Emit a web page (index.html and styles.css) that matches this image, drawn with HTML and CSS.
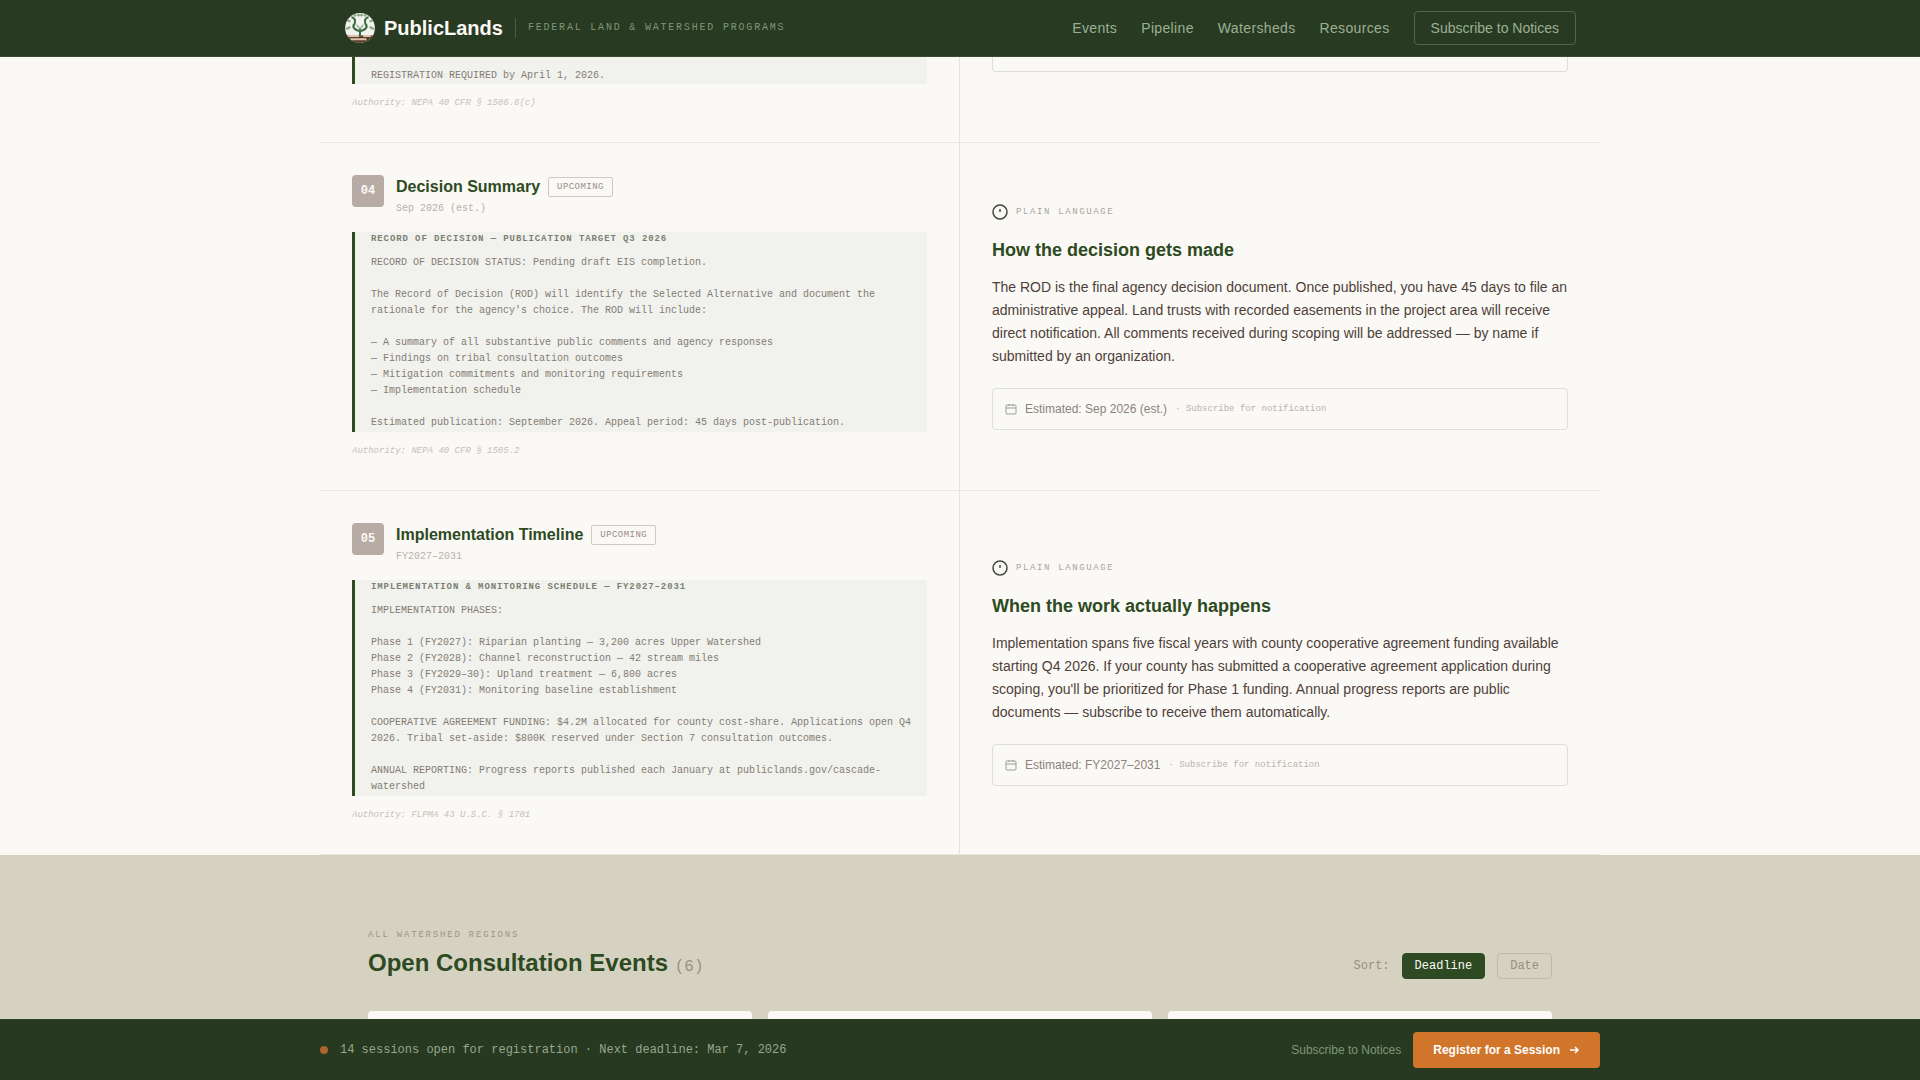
FILE: index.html
```html
<!DOCTYPE html>
<html lang="en">
<head>
    <meta charset="UTF-8">
    <meta name="viewport" content="width=device-width, initial-scale=1.0">
    <title>PublicLands</title>
    <link rel="stylesheet" href="styles.css">
</head>
<body>
    <header class="site-header">
        <div class="header-inner">
            <a class="brand" href="#">
                <svg class="brand-logo" viewBox="-1 -1 30 30" aria-hidden="true">
                    <clipPath id="logo-clip"><circle cx="14" cy="14" r="14"/></clipPath>
                    <g clip-path="url(#logo-clip)">
                        <rect width="28" height="28" fill="#eff3ec"/>
                        <path d="M0 6l5 2M28 6l-5 2M1 15l4-2M27 15l-4-2M8 1l2 2M20 1l-2 2M11 2h6" stroke="#8ba588" stroke-width="2"/>
                        <rect y="21" width="28" height="7" fill="#5a3f2c"/>
                        <path d="M3 21.500h10M17 21.500h7M5 24.500h15" stroke="#dfc3aa" stroke-width="2"/>
                        <path d="M14 22v-7M14 17C9 16 6 13 9 10C10 7 9 4 6 4M14 17C19 16 22 13 19 10C18 7 19 4 22 4" fill="none" stroke="#416b47" stroke-width="2"/>
                        <path d="M11 11l3 4 3-4" fill="none" stroke="#6f9470" stroke-width="1"/>
                    </g>
                </svg>
                <span class="brand-name">PublicLands</span>
                <span class="brand-tag">FEDERAL LAND &amp; WATERSHED PROGRAMS</span>
            </a>
            <nav class="main-nav">
                <a href="#events">Events</a>
                <a href="#pipeline">Pipeline</a>
                <a href="#">Watersheds</a>
                <a href="#">Resources</a>
                <button type="button" class="btn-outline">Subscribe to Notices</button>
            </nav>
        </div>
    </header>

    <main class="pipeline" id="pipeline">
        <section class="stage stage-partial">
            <div class="stage-official">
                <div class="document">
                    <p class="document-text">REGISTRATION REQUIRED by April 1, 2026.</p>
                </div>
                <p class="authority">Authority: NEPA 40 CFR § 1506.6(c)</p>
            </div>
            <div class="stage-plain">
                <div class="notice"></div>
            </div>
        </section>

        <section class="stage">
            <div class="stage-official">
                <div class="stage-head">
                    <span class="stage-number">04</span>
                    <div>
                        <div class="stage-title">
                            <h3>Decision Summary</h3>
                            <span class="badge">UPCOMING</span>
                        </div>
                        <p class="stage-date">Sep 2026 (est.)</p>
                    </div>
                </div>
                <div class="document">
                    <h4>RECORD OF DECISION — PUBLICATION TARGET Q3 2026</h4>
                    <p class="document-text">RECORD OF DECISION STATUS: Pending draft EIS completion.

The Record of Decision (ROD) will identify the Selected Alternative and document the rationale for the agency's choice. The ROD will include:

— A summary of all substantive public comments and agency responses
— Findings on tribal consultation outcomes
— Mitigation commitments and monitoring requirements
— Implementation schedule

Estimated publication: September 2026. Appeal period: 45 days post-publication.</p>
                </div>
                <p class="authority">Authority: NEPA 40 CFR § 1505.2</p>
            </div>
            <div class="stage-plain">
                <p class="plain-label">
                    <svg class="icon-info" viewBox="0 0 16 16" aria-hidden="true">
                        <circle cx="8" cy="8" r="7"/>
                        <path d="M8 5v3"/>
                    </svg>
                    PLAIN LANGUAGE
                </p>
                <h3>How the decision gets made</h3>
                <p class="plain-text">The ROD is the final agency decision document. Once published, you have 45 days to file an administrative appeal. Land trusts with recorded easements in the project area will receive direct notification. All comments received during scoping will be addressed — by name if submitted by an organization.</p>
                <div class="notice">
                    <svg class="icon-calendar" viewBox="0 0 12 12" aria-hidden="true">
                        <rect x="1" y="2" width="10" height="9" rx="1"/>
                        <path d="M1 5h10M4 1v2M8 1v2"/>
                    </svg>
                    <span>Estimated: Sep 2026 (est.)</span>
                    <span class="notice-hint">· Subscribe for notification</span>
                </div>
            </div>
        </section>

        <section class="stage">
            <div class="stage-official">
                <div class="stage-head">
                    <span class="stage-number">05</span>
                    <div>
                        <div class="stage-title">
                            <h3>Implementation Timeline</h3>
                            <span class="badge">UPCOMING</span>
                        </div>
                        <p class="stage-date">FY2027–2031</p>
                    </div>
                </div>
                <div class="document">
                    <h4>IMPLEMENTATION &amp; MONITORING SCHEDULE — FY2027–2031</h4>
                    <p class="document-text">IMPLEMENTATION PHASES:

Phase 1 (FY2027): Riparian planting — 3,200 acres Upper Watershed
Phase 2 (FY2028): Channel reconstruction — 42 stream miles
Phase 3 (FY2029–30): Upland treatment — 6,800 acres
Phase 4 (FY2031): Monitoring baseline establishment

COOPERATIVE AGREEMENT FUNDING: $4.2M allocated for county cost-share. Applications open Q4 2026. Tribal set-aside: $800K reserved under Section 7 consultation outcomes.

ANNUAL REPORTING: Progress reports published each January at publiclands.gov/cascade-watershed</p>
                </div>
                <p class="authority">Authority: FLPMA 43 U.S.C. § 1701</p>
            </div>
            <div class="stage-plain">
                <p class="plain-label">
                    <svg class="icon-info" viewBox="0 0 16 16" aria-hidden="true">
                        <circle cx="8" cy="8" r="7"/>
                        <path d="M8 5v3"/>
                    </svg>
                    PLAIN LANGUAGE
                </p>
                <h3>When the work actually happens</h3>
                <p class="plain-text">Implementation spans five fiscal years with county cooperative agreement funding available starting Q4 2026. If your county has submitted a cooperative agreement application during scoping, you'll be prioritized for Phase 1 funding. Annual progress reports are public documents — subscribe to receive them automatically.</p>
                <div class="notice">
                    <svg class="icon-calendar" viewBox="0 0 12 12" aria-hidden="true">
                        <rect x="1" y="2" width="10" height="9" rx="1"/>
                        <path d="M1 5h10M4 1v2M8 1v2"/>
                    </svg>
                    <span>Estimated: FY2027–2031</span>
                    <span class="notice-hint">· Subscribe for notification</span>
                </div>
            </div>
        </section>
    </main>

    <section class="events" id="events">
        <div class="events-inner">
            <div class="events-head">
                <div>
                    <p class="eyebrow">ALL WATERSHED REGIONS</p>
                    <h2>Open Consultation Events <span class="count">(6)</span></h2>
                </div>
                <div class="sort">
                    <span>Sort:</span>
                    <button type="button" class="sort-btn active">Deadline</button>
                    <button type="button" class="sort-btn">Date</button>
                </div>
            </div>
            <div class="event-grid">
                <article class="event-card"></article>
                <article class="event-card"></article>
                <article class="event-card"></article>
            </div>
        </div>
    </section>

    <div class="action-bar">
        <div class="action-inner">
            <p class="status"><span class="dot"></span>14 sessions open for registration · Next deadline: Mar 7, 2026</p>
            <div class="actions">
                <a href="#">Subscribe to Notices</a>
                <button type="button" class="btn-primary">
                    Register for a Session
                    <svg class="icon-arrow" viewBox="0 0 12 12" aria-hidden="true">
                        <path d="M2 6h8M7 3l3 3-3 3"/>
                    </svg>
                </button>
            </div>
        </div>
    </div>
</body>
</html>
```
FILE: styles.css
```css
* {
    box-sizing: border-box;
    margin: 0;
    padding: 0;
}

body {
    font-family: "Liberation Sans", Arial, sans-serif;
    background-color: #fbf9f5;
    color: #4e3f39;
    min-height: 100vh;
    display: flex;
    flex-direction: column;
}

button {
    font-family: inherit;
    cursor: pointer;
}

a {
    color: inherit;
    text-decoration: none;
}

svg {
    display: block;
    flex-shrink: 0;
}

/* Header */
.site-header {
    position: sticky;
    top: 0;
    background-color: #283b22;
    border-bottom: 1px solid #3a4a33;
}

.header-inner {
    max-width: 1280px;
    height: 56px;
    margin: 0 auto;
    padding: 0 24px;
    display: flex;
    align-items: center;
    justify-content: space-between;
}

.brand {
    display: flex;
    align-items: center;
}

.brand-logo {
    width: 32px;
    height: 32px;
    margin-right: 8px;
}

.brand-name {
    margin-right: 12px;
    color: #fbf9f5;
    font-size: 20px;
    font-weight: bold;
}

.brand-tag {
    border-left: 1px solid #4a6044;
    padding-left: 12px;
    font-family: "Liberation Mono", monospace;
    font-size: 10px;
    line-height: 20px;
    letter-spacing: 0.18em;
    color: #7f9678;
}

.main-nav {
    display: flex;
    align-items: center;
    gap: 24px;
    font-size: 14px;
    letter-spacing: 0.025em;
    color: #9caf94;
}

.btn-outline {
    height: 34px;
    padding: 0 16px;
    border: 1px solid #4d6947;
    border-radius: 4px;
    background: none;
    color: #9caf94;
    font-size: 14px;
}

/* Pipeline stages */
.pipeline {
    width: 100%;
    max-width: 1280px;
    margin: 0 auto;
}

.stage {
    display: grid;
    grid-template-columns: 1fr 1fr;
    border-bottom: 1px solid #e9e7e2;
}

.stage-official {
    padding: 32px;
    border-right: 1px solid #e5e3de;
}

.stage-plain {
    padding: 32px;
    display: flex;
    flex-direction: column;
    justify-content: center;
}

.stage-head {
    display: flex;
    gap: 12px;
    margin-bottom: 16px;
}

.stage-number {
    width: 32px;
    height: 32px;
    border-radius: 4px;
    background-color: #b8aba5;
    color: #fbf9f5;
    font-family: "Liberation Mono", monospace;
    font-size: 12px;
    font-weight: bold;
    line-height: 32px;
    text-align: center;
}

.stage-title {
    display: flex;
    align-items: center;
    gap: 8px;
}

.stage-title h3 {
    color: #2d4a22;
    font-size: 16px;
    line-height: 24px;
}

.badge {
    padding: 2px 8px;
    border: 1px solid #cfc8c3;
    border-radius: 2px;
    font-family: "Liberation Mono", monospace;
    font-size: 9px;
    line-height: 14px;
    letter-spacing: 0.05em;
    color: #968d87;
}

.stage-date {
    margin-top: 2px;
    font-family: "Liberation Mono", monospace;
    font-size: 10px;
    line-height: 15px;
    color: #b8b0aa;
}

.document {
    border-left: 3px solid #2d4a22;
    padding: 0 12px 1px 16px;
    background-color: #f1f2ed;
    font-family: "Liberation Mono", monospace;
    color: #847b74;
}

.document h4 {
    margin-bottom: 9px;
    font-size: 9px;
    line-height: 14px;
    letter-spacing: 0.1em;
    color: #7b7f73;
}

.document-text {
    font-size: 10px;
    line-height: 16px;
    white-space: pre-line;
}

.authority {
    margin-top: 12px;
    font-family: "Liberation Mono", monospace;
    font-size: 9px;
    font-style: italic;
    line-height: 14px;
    color: #c6c0ba;
}

.plain-label {
    display: flex;
    align-items: center;
    gap: 8px;
    font-family: "Liberation Mono", monospace;
    font-size: 9px;
    line-height: 16px;
    letter-spacing: 0.18em;
    color: #aaa39d;
}

.icon-info {
    width: 16px;
    height: 16px;
    fill: none;
    stroke: #3f4a39;
    stroke-width: 1.5;
}

.stage-plain h3 {
    margin: 18px 0 14px;
    color: #2d4a22;
    font-size: 18px;
    line-height: 24px;
}

.plain-text {
    font-size: 14px;
    line-height: 23px;
}

.notice {
    height: 42px;
    margin-top: 20px;
    padding: 0 12px;
    border: 1px solid #dedfd8;
    border-radius: 4px;
    display: flex;
    align-items: center;
    gap: 8px;
    font-size: 12px;
    color: #8b827c;
}

.icon-calendar {
    width: 12px;
    height: 12px;
    fill: none;
    stroke: #999f91;
    stroke-width: 1;
}

.notice-hint {
    font-family: "Liberation Mono", monospace;
    font-size: 9px;
    color: #b9b3ad;
}

/* Tail end of the previous stage */
.stage-partial .stage-official,
.stage-partial .stage-plain {
    padding-top: 0;
    justify-content: flex-start;
}

.stage-partial .document {
    padding-top: 11px;
    padding-bottom: 0;
}

.stage-partial .notice {
    height: 15px;
    margin-top: 0;
    border-top: none;
    border-radius: 0 0 4px 4px;
}

/* Events */
.events {
    flex: 1;
    display: flex;
    background-color: #d6d2c2;
}

.events-inner {
    width: 100%;
    max-width: 1280px;
    margin: 0 auto;
    padding: 72px 48px 0;
    display: flex;
    flex-direction: column;
}

.events-head {
    display: flex;
    align-items: flex-end;
    justify-content: space-between;
    margin-bottom: 32px;
}

.eyebrow {
    margin-bottom: 8px;
    font-family: "Liberation Mono", monospace;
    font-size: 9px;
    line-height: 16px;
    letter-spacing: 0.2em;
    color: #9a9485;
}

.events h2 {
    color: #2d4a22;
    font-size: 24px;
    line-height: 24px;
}

.count {
    font-family: "Liberation Mono", monospace;
    font-size: 16px;
    font-weight: normal;
    color: #9a9183;
}

.sort {
    display: flex;
    align-items: center;
    gap: 12px;
    font-family: "Liberation Mono", monospace;
    font-size: 12px;
    color: #979080;
}

.sort-btn {
    height: 26px;
    padding: 0 12px;
    border: 1px solid #bfbbab;
    border-radius: 4px;
    background: none;
    color: #979080;
    font-size: 12px;
}

.sort-btn.active {
    border-color: #2d4a22;
    background-color: #2d4a22;
    color: #fbf9f5;
}

.event-grid {
    flex: 1;
    display: grid;
    grid-template-columns: repeat(3, 1fr);
    gap: 16px;
}

.event-card {
    border-radius: 4px 4px 0 0;
    background-color: #fbf9f5;
}

/* Bottom action bar */
.action-bar {
    position: fixed;
    left: 0;
    right: 0;
    bottom: 0;
    border-top: 1px solid #2f4228;
    background-color: #273920;
}

.action-inner {
    max-width: 1280px;
    margin: 0 auto;
    padding: 12px 0;
    display: flex;
    align-items: center;
    justify-content: space-between;
}

.status {
    display: flex;
    align-items: center;
    gap: 12px;
    font-family: "Liberation Mono", monospace;
    font-size: 12px;
    color: #96a78e;
}

.dot {
    width: 8px;
    height: 8px;
    border-radius: 50%;
    background-color: #a9652a;
}

.actions {
    display: flex;
    align-items: center;
    gap: 12px;
    font-size: 12px;
    color: #7f9678;
}

.btn-primary {
    height: 36px;
    padding: 0 20px;
    border: none;
    border-radius: 4px;
    display: flex;
    align-items: center;
    gap: 8px;
    background-color: #d1752b;
    color: #fff;
    font-size: 12px;
    font-weight: bold;
}

.icon-arrow {
    width: 12px;
    height: 12px;
    fill: none;
    stroke: currentColor;
    stroke-width: 1.5;
}
```
